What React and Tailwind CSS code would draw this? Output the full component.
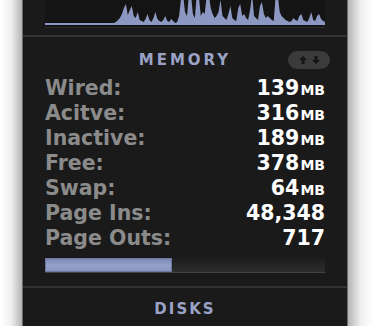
import React from "react";

function Graph() {
  const pts = [];
  const W = 282;
  const base = 24;
  const seed = [
    1,0,0,1,0,0,1,0,0,1,0,0,1,0,0,1,0,0,1,0,0,1,0,0,1,0,0,1,0,0,1,0,0,1,0,1,
    2,4,6,10,16,20,9,14,18,8,6,12,4,3,2,5,10,4,2,6,12,5,3,2,4,8,3,2,5,3,1,
    2,8,26,30,12,8,34,36,10,6,30,28,8,12,10,28,36,16,10,6,8,12,24,8,6,4,10,18,6,4,3,16,20,8,10,6,4,14,30,8,6,4,18,22,10,6,8,6,4,3,34,36,
    12,8,6,4,3,2,3,6,4,3,8,10,4,3,2,6,12,4,3,8,10,5,3,2,3
  ];
  const n = seed.length;
  pts.push(`0,${base}`);
  for (let i = 0; i < n; i++) {
    const x = (i / (n - 1)) * W;
    const h = Math.min(seed[i], 30);
    pts.push(`${x.toFixed(1)},${(base - h).toFixed(1)}`);
  }
  pts.push(`${W},${base}`);
  return (
    <svg width={W} height={27} viewBox={`0 0 ${W} 27`} className="block">
      <polygon points={pts.join(" ")} fill="#8d98c2" />
      <rect x="0" y="23" width={W} height="2" fill="#8d98c2" />
    </svg>
  );
}

const rows = [
  ["Wired:", "139", true],
  ["Acitve:", "316", true],
  ["Inactive:", "189", true],
  ["Free:", "378", true],
  ["Swap:", "64", true],
  ["Page Ins:", "48,348", false],
  ["Page Outs:", "717", false],
];

export default function App() {
  const font = { fontFamily: '"DejaVu Sans", "Liberation Sans", sans-serif' };
  return (
    <div className="w-[374px] h-[326px] overflow-hidden bg-white flex" style={font}>
      <div className="w-[22px] h-full bg-gradient-to-r from-white via-[#f0f0f0] to-[#b5b5b5]" />
      <div className="w-[326px] h-full bg-[#1a1a1a] border-x border-[#6a6a6a] flex flex-col">
        {/* graph */}
        <div className="px-[22px] h-[35px]">
          <div className="h-[28px] bg-[#141414] border-b border-[#2a2a2a] overflow-hidden">
            <Graph />
          </div>
        </div>
        <div className="h-[2px] bg-[#333333]" />
        {/* memory */}
        <div className="relative flex flex-col pt-[14px]">
          <div className="text-center text-[15px] font-bold tracking-[3px] text-[#9aa3c6] leading-[18px]">
            MEMORY
          </div>
          <div className="absolute right-[17px] top-[14px] w-[42px] h-[18px] rounded-full bg-[#3b3b3b] flex items-center justify-center gap-[3px]">
            <svg width="10" height="10" viewBox="0 0 10 10">
              <path d="M5 1 L9 5 L6.5 5 L6.5 9 L3.5 9 L3.5 5 L1 5 Z" fill="#151515" />
            </svg>
            <svg width="10" height="10" viewBox="0 0 10 10">
              <path d="M5 9 L9 5 L6.5 5 L6.5 1 L3.5 1 L3.5 5 L1 5 Z" fill="#151515" />
            </svg>
          </div>
          <div className="flex flex-col px-[22px] pt-[7px]">
            {rows.map(([l, v, mb]) => (
              <div key={l} className="flex justify-between items-baseline h-[25px] leading-[25px]">
                <span className="text-[20.5px] font-bold text-[#8b8b8b]">{l}</span>
                <span className="text-[20.5px] font-bold text-white">
                  {v}
                  {mb && <span className="text-[14px] ml-[1px]">MB</span>}
                </span>
              </div>
            ))}
          </div>
          <div className="px-[22px] pt-[7px]">
            <div className="h-[15px] flex bg-gradient-to-b from-[#1c1c1c] to-[#2e2e2e] border-b border-[#444]">
              <div className="w-[127px] h-full bg-gradient-to-b from-[#7d89b3] via-[#95a0c8] to-[#8a95bd] border border-[#6c77a0]" />
            </div>
          </div>
        </div>
        <div className="mt-[13px] h-[2px] bg-[#333333]" />
        <div className="text-center text-[15px] font-bold tracking-[2px] text-[#9aa3c6] pt-[12px] leading-[18px]">
          DISKS
        </div>
      </div>
      <div className="flex-1 h-full bg-gradient-to-r from-[#b5b5b5] via-[#f0f0f0] to-white" />
    </div>
  );
}
